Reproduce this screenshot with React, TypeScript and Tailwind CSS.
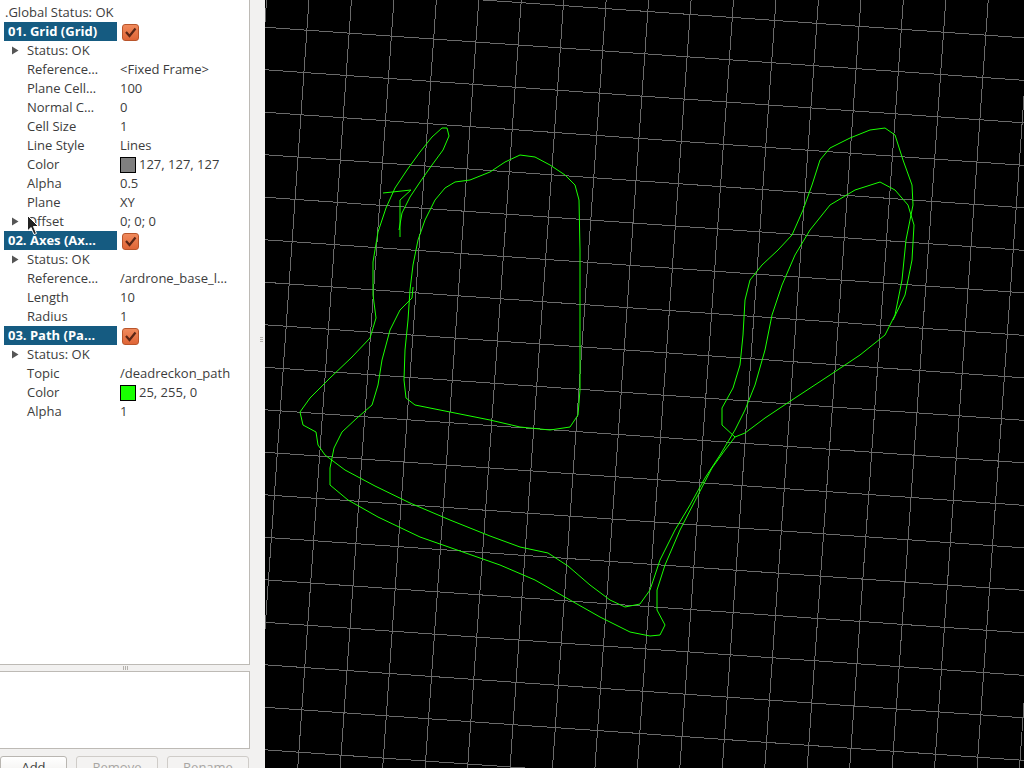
import React from "react";

type Prop = {
  kind: "prop";
  label: string;
  value: string;
  expand?: boolean;
  swatch?: string;
};
type Head = { kind: "head"; title: string };
type Row = Prop | Head;

const rows: Row[] = [
  { kind: "head", title: "01. Grid (Grid)" },
  { kind: "prop", label: "Status: OK", value: "", expand: true },
  { kind: "prop", label: "Reference…", value: "<Fixed Frame>" },
  { kind: "prop", label: "Plane Cell…", value: "100" },
  { kind: "prop", label: "Normal C…", value: "0" },
  { kind: "prop", label: "Cell Size", value: "1" },
  { kind: "prop", label: "Line Style", value: "Lines" },
  { kind: "prop", label: "Color", value: "127, 127, 127", swatch: "#7f7f7f" },
  { kind: "prop", label: "Alpha", value: "0.5" },
  { kind: "prop", label: "Plane", value: "XY" },
  { kind: "prop", label: "Offset", value: "0; 0; 0", expand: true },
  { kind: "head", title: "02. Axes (Ax…" },
  { kind: "prop", label: "Status: OK", value: "", expand: true },
  { kind: "prop", label: "Reference…", value: "/ardrone_base_l…" },
  { kind: "prop", label: "Length", value: "10" },
  { kind: "prop", label: "Radius", value: "1" },
  { kind: "head", title: "03. Path (Pa…" },
  { kind: "prop", label: "Status: OK", value: "", expand: true },
  { kind: "prop", label: "Topic", value: "/deadreckon_path" },
  { kind: "prop", label: "Color", value: "25, 255, 0", swatch: "#19ff00" },
  { kind: "prop", label: "Alpha", value: "1" },
];

// recorded trajectory, screen coordinates
const tracks = [
  "M325,455 L318,445 L316,432 L303,425 L300,412 L310,398 L330,378 L352,357 L370,338 L376,318 L373,295 L373,262 L378,232 L386,208 L395,188 L407,170 L420,152 L432,137 L442,128 L447,128 L449,136 L443,150 L432,165 L420,182 L410,197 L402,213 L399,230",
  "M383,193 L411,190 L400,200 L400,237",
  "M520,155 L505,162 L490,172 L470,180 L455,182 L445,188 L435,200 L425,220 L418,240 L413,265 L410,290 L408,320 L405,350 L404,380 L406,398 L415,405 L450,412 L490,420 L520,427 L550,430 L570,427 L578,415 L580,390 L580,350 L580,300 L580,250 L579,200 L575,185 L565,175 L550,165 L535,157 L520,155",
  "M330,485 L330,468 L334,448 L342,432 L357,418 L372,405 L378,385 L382,360 L390,330 L400,310 L412,298 L413,287",
  "M325,455 L345,470 L375,486 L410,503 L450,520 L490,536 L520,547 L548,553 L568,566 L590,585 L610,600 L625,607 L640,604 L650,590 L660,560 L675,530 L690,505 L705,478 L720,455 L735,430 L745,410 L755,385 L765,350 L772,315 L782,285 L795,255 L810,230 L830,205 L855,190 L880,182 L895,190 L908,205 L914,225 L912,260 L905,295 L893,320",
  "M330,485 L348,500 L378,517 L420,537 L460,551 L500,565 L535,580 L570,600 L600,617 L630,632 L650,636 L660,635 L665,625 L657,610 L657,590 L665,565 L680,530 L698,495 L712,468 L725,450 L735,437",
  "M735,437 L722,425 L722,408 L733,388 L740,365 L743,335 L745,300 L750,280 L762,265 L778,250 L792,235 L803,210 L812,185 L820,160 L830,148 L850,138 L870,130 L885,128 L895,135 L903,160 L912,185 L913,205 L906,240 L902,280 L895,315 L885,335 L860,355 L830,375 L795,398 L765,418 L745,433 L735,437",
];

function Checkbox() {
  return (
    <div className="ml-[5px] mt-[1px] h-[17px] w-[17px] rounded-[3px] border border-[#b9552b] bg-gradient-to-b from-[#f08a5c] to-[#df6536]">
      <svg width="15" height="15" viewBox="0 0 15 15">
        <path d="M3 7 L6.5 11 L12.5 3.5" fill="none" stroke="#5a2616" strokeWidth="2.2" />
      </svg>
    </div>
  );
}

function Expander() {
  return (
    <svg width="7" height="9" viewBox="0 0 7 9" className="ml-[12px]">
      <path d="M0 0.5 L6.5 4.5 L0 8.5 Z" fill="#555" />
    </svg>
  );
}

function TreeRow({ row }: { row: Row }) {
  if (row.kind === "head") {
    return (
      <div className="flex h-[19px] items-center">
        <div className="ml-[4px] h-[19px] w-[113px] bg-[#155b81] pl-[4px] font-bold leading-[19px] text-white">
          {row.title}
        </div>
        <Checkbox />
      </div>
    );
  }
  return (
    <div className="flex h-[19px] items-center leading-[19px] text-[#3c3c3c]">
      <div className="flex w-[27px] items-center">{row.expand && <Expander />}</div>
      <div className="w-[93px] whitespace-nowrap">{row.label}</div>
      {row.swatch && (
        <div
          className="mr-[3px] h-[16px] w-[16px] border border-black"
          style={{ background: row.swatch }}
        />
      )}
      <div className="whitespace-nowrap">{row.value}</div>
    </div>
  );
}

function GridView() {
  const cos = Math.cos((4 * Math.PI) / 180);
  const us: number[] = [];
  const vs: number[] = [];
  for (let k = -3; k < 22; k++) us.push(308.25 + 42.35 * k);
  for (let k = -4; k < 22; k++) vs.push(8.7 + 42.4 * k);
  return (
    <svg width="759" height="768" viewBox="265 0 759 768" className="block">
      <g transform="rotate(4)" stroke="#6a6a6a" strokeWidth="1" shapeRendering="crispEdges">
        {us.map((u) => (
          <line key={"u" + u} x1={u} y1={-300} x2={u} y2={1100} />
        ))}
        {vs.map((v) => (
          <line key={"v" + v} x1={0} y1={v} x2={1300 / cos} y2={v} />
        ))}
      </g>
      <g fill="none" stroke="#19ff00" strokeWidth="1" strokeLinejoin="round">
        {tracks.map((d, i) => (
          <path key={i} d={d} />
        ))}
      </g>
    </svg>
  );
}

export default function App() {
  return (
    <div
      className="flex h-[768px] w-[1024px] overflow-hidden bg-[#f2f1f0] text-[13px]"
      style={{ fontFamily: '"Open Sans", "DejaVu Sans", sans-serif' }}
    >
      <div className="relative flex h-[768px] w-[265px] shrink-0 flex-col overflow-hidden">
        <div className="h-[665px] w-[250px] shrink-0 overflow-hidden border-r border-b border-[#bdbab5] bg-white pt-[3px]">
          <div className="flex h-[19px] items-center pl-[5px] leading-[19px] text-[#3c3c3c]">
            .Global Status: OK
          </div>
          {rows.map((r, i) => (
            <TreeRow key={i} row={r} />
          ))}
        </div>
        <div className="flex h-[6px] w-[250px] shrink-0 items-center justify-center">
          <div className="flex gap-[1px]">
            <div className="h-[4px] w-px bg-[#b5b2ad]" />
            <div className="h-[4px] w-px bg-[#b5b2ad]" />
            <div className="h-[4px] w-px bg-[#b5b2ad]" />
          </div>
        </div>
        <div className="h-[78px] w-[250px] shrink-0 border-y border-r border-[#bdbab5] bg-white" />
        <div className="mt-[7px] flex w-[250px] shrink-0 gap-[9px]">
          <button className="flex h-[28px] w-[67px] shrink-0 items-start justify-center rounded-[3px] border border-[#b9b6b1] bg-gradient-to-b from-white to-[#eceae7] pt-[2px] leading-[16px] text-[#3c3c3c]">
            Add
          </button>
          <button className="flex h-[28px] w-[82px] shrink-0 items-start justify-center rounded-[3px] border border-[#cfccc8] bg-[#f4f3f2] pt-[2px] leading-[16px] text-[#a8a6a3]">
            Remove
          </button>
          <button className="flex h-[28px] w-[82px] shrink-0 items-start justify-center rounded-[3px] border border-[#cfccc8] bg-[#f4f3f2] pt-[2px] leading-[16px] text-[#a8a6a3]">
            Rename
          </button>
        </div>
        <div className="absolute right-[2px] top-[337px] flex flex-col gap-[1px]">
          <div className="h-px w-[3px] bg-[#b5b2ad]" />
          <div className="h-px w-[3px] bg-[#b5b2ad]" />
          <div className="h-px w-[3px] bg-[#b5b2ad]" />
        </div>
        <svg
          className="absolute left-[27px] top-[215px]"
          width="13"
          height="21"
          viewBox="0 0 13 21"
        >
          <path
            d="M0.5 0.5 L0.5 16 L4 12.5 L7 19.5 L9.5 18.5 L6.5 11.5 L11.5 11.5 Z"
            fill="#222"
            stroke="#fff"
            strokeWidth="1"
          />
        </svg>
      </div>
      <div className="flex-1 bg-black">
        <GridView />
      </div>
    </div>
  );
}
